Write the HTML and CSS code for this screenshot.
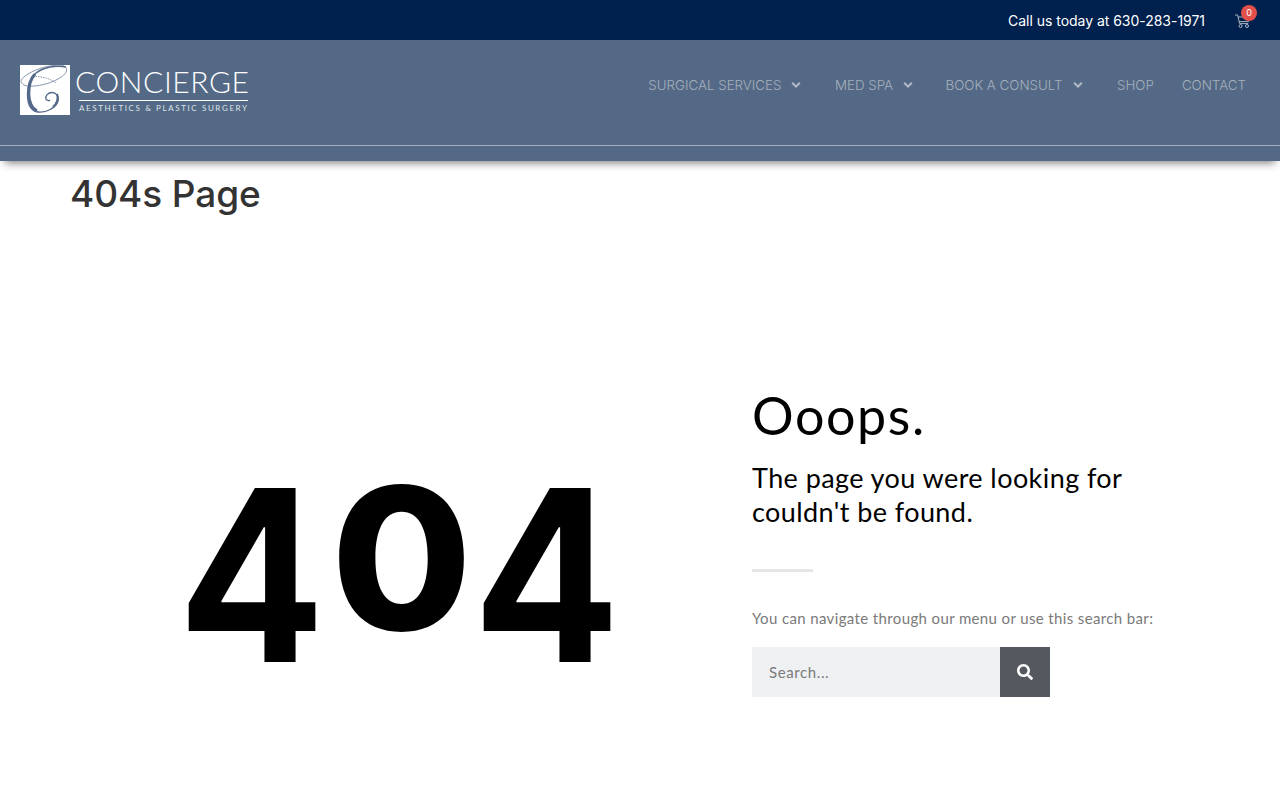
FILE: index.html
```html
<!DOCTYPE html>
<html lang="en">
<head>
<meta charset="utf-8">
<title>404s Page</title>
<link rel="stylesheet" href="styles.css">
</head>
<body>
<div class="topbar">
  <span class="phone">Call us today at 630-283-1971</span>
  <a class="cart" href="#">
    <svg class="cart-icon" viewBox="0 0 18 16" width="18" height="16" fill="none" stroke="#a9b2c0" stroke-width="1"><path d="M1 2h2.600l2 8.600h8.600"/><path d="M4 4h12l-1.400 4.600H5"/><circle cx="6.600" cy="13" r="1.500"/><circle cx="13" cy="13" r="1.500"/></svg>
    <span class="badge">0</span>
  </a>
</div>
<header class="header">
  <div class="header-main">
    <a class="logo" href="#">
      <svg width="232" height="60" viewBox="0 -6 232 60">
        <rect x="0" y="1" width="50" height="50" fill="#fff"/>
        <path d="M46 3C36 1 24 3 16 9C10 14 7.500 22 7.500 30C7.500 40 11 47 18 48C26 49 36 44 38 37C39 32 36 28.500 32 28.500C28 28.500 25 32 26 35C27 37 29 37 30 36" fill="none" stroke="#54698a" stroke-width="1.400"/>
        <path d="M15 10C10 15 8.800 22 8.800 30C8.800 38 12 45 17 47" fill="none" stroke="#54698a" stroke-width="3"/>
        <path d="M37 30C39 34 37 40 33 43" fill="none" stroke="#54698a" stroke-width="2.200"/>
        <path d="M1 16C6 9 24 1 40 1C50 2 48 10 38 15C28 21 10 24 4 21C1 19 1 17 1 16" fill="none" stroke="#54698a" stroke-width=".7"/>
        <path d="M13 12.700C22 12 31 15 36.700 19.300" fill="none" stroke="#54698a" stroke-width=".7" stroke-dasharray="1.500 1"/>
        <text class="logo-name" x="55" y="29" textLength="174" lengthAdjust="spacing">CONCIERGE</text>
        <rect x="59" y="36" width="169" height="1" fill="#fff"/>
        <text class="logo-sub" x="59" y="47" textLength="168" lengthAdjust="spacing">AESTHETICS &amp; PLASTIC SURGERY</text>
      </svg>
    </a>
    <nav class="nav">
      <a class="nav-item" href="#">SURGICAL SERVICES<svg class="chev" viewBox="0 0 10 8" width="10" height="8"><path d="M1.200 1.800 5 5.600l3.800-3.800" fill="none" stroke="#b3bcc8" stroke-width="2"/></svg></a>
      <a class="nav-item" href="#">MED SPA<svg class="chev" viewBox="0 0 10 8" width="10" height="8"><path d="M1.200 1.800 5 5.600l3.800-3.800" fill="none" stroke="#b3bcc8" stroke-width="2"/></svg></a>
      <a class="nav-item" href="#">BOOK A CONSULT<svg class="chev" viewBox="0 0 10 8" width="10" height="8"><path d="M1.200 1.800 5 5.600l3.800-3.800" fill="none" stroke="#b3bcc8" stroke-width="2"/></svg></a>
      <a class="nav-item" href="#">SHOP</a>
      <a class="nav-item" href="#">CONTACT</a>
    </nav>
  </div>
</header>
<main class="page">
  <h1 class="page-title">404s Page</h1>
  <div class="columns">
    <div class="left"><div class="big"><span class="digit four">4</span><span class="digit zero">0</span><span class="digit four last">4</span></div></div>
    <div class="right">
      <h2 class="oops">Ooops.</h2>
      <h3 class="lead">The page you were looking for couldn't be found.</h3>
      <div class="divider"></div>
      <p class="hint">You can navigate through our menu or use this search bar:</p>
      <form class="search">
        <input class="search-input" type="text" placeholder="Search...">
        <button class="search-btn" type="button" aria-label="Search">
          <svg viewBox="0 0 512 512" width="16" height="16"><path fill="#fff" d="M505 442.700 405.300 343c-4.500-4.500-10.600-7-17-7H372c27.600-35.300 44-79.700 44-128C416 93.100 322.900 0 208 0S0 93.100 0 208s93.100 208 208 208c48.300 0 92.700-16.400 128-44v16.300c0 6.400 2.500 12.500 7 17l99.700 99.700c9.400 9.400 24.600 9.400 33.900 0l28.300-28.300c9.400-9.400 9.400-24.600.1-34zM208 336c-70.700 0-128-57.200-128-128 0-70.700 57.200-128 128-128 70.700 0 128 57.200 128 128 0 70.700-57.200 128-128 128z"/></svg>
        </button>
      </form>
    </div>
  </div>
</main>
</body>
</html>
```
FILE: styles.css
```css
* { box-sizing: border-box; }
html, body { margin: 0; padding: 0; }
body { height: 800px; overflow: hidden; background: #fff; font-family: Inter, "Liberation Sans", sans-serif; }
a { text-decoration: none; color: inherit; }

.topbar { height: 40px; background: #00204e; display: flex; align-items: center; justify-content: flex-end; padding-right: 29px; }
.phone { color: #fff; font-size: 14px; line-height: 20px; margin-right: 29px; margin-top: 1px; letter-spacing: -.03px; }
.cart { position: relative; display: block; width: 17px; height: 16px; margin-top: 1px; }
.cart-icon { display: block; }
.badge { position: absolute; top: -8px; left: 7px; width: 16px; height: 16px; border-radius: 50%; background: #e2504c; color: #fff; font-size: 9px; line-height: 16px; text-align: center; }

.header { height: 121px; background: #546985; box-shadow: 0 7px 8px -5px rgba(0,0,0,.5); position: relative; padding-bottom: 15px; }
.header-main { height: 106px; border-bottom: 1px solid #a5b0bf; display: flex; justify-content: space-between; padding: 18px 34px 0 20px; }
.logo { display: block; height: 60px; }
.logo svg { display: block; }
.logo-name { font-family: Lato, sans-serif; font-weight: 300; font-size: 30px; fill: #fff; }
.logo-sub { font-family: Lato, sans-serif; font-size: 8px; fill: #dfe4ea; }

.nav { display: flex; height: 42px; margin-top: 6px; align-items: center; color: #a5afbd; font-size: 13.350px; font-weight: 300; }
.nav-item { display: flex; align-items: center; white-space: nowrap; margin-left: 33.500px; }
.nav-item:first-child { margin-left: 0; }
.nav-item:nth-child(3) { margin-left: 32.500px; }
.nav-item:nth-child(4) { margin-left: 34.500px; }
.nav-item:last-child { margin-left: 28px; }
.chev { margin-left: 10px; }

.page { padding: 0; }
.page-title { margin: 11px 0 0 70px; font-size: 37px; line-height: 44px; font-weight: 500; color: #333; letter-spacing: -.1px; }
.columns { display: flex; margin-top: 172px; }
.left { width: 752px; }
.big { display: flex; align-items: flex-start; padding-left: 187px; margin-top: 68px; font-family: Inter, sans-serif; font-weight: 800; color: #000; }
.digit { display: flex; justify-content: center; width: 129px; }
.four { font-size: 239px; line-height: 239px; font-weight: 700; transform: scaleX(.91); }
.zero { width: 131px; font-size: 198px; line-height: 198px; margin: 3px 15px 0 20px; transform: scaleX(1.030); }
.right { flex: 1; font-family: Lato, sans-serif; }
.oops { margin: -3px 0 0; font-size: 52px; line-height: 60px; font-weight: 400; color: #000; letter-spacing: 1.600px; }
.lead { margin: 16px 0 0; width: 400px; font-size: 27px; line-height: 34px; font-weight: 400; color: #000; letter-spacing: .42px; }
.divider { width: 61px; height: 3px; margin-top: 40px; background: #e6e6e6; }
.hint { margin: 35px 0 0; font-size: 15px; line-height: 22px; color: #7a7a7a; letter-spacing: .37px; }
.search { display: flex; width: 298px; height: 50px; margin-top: 18px; }
.search-input { flex: 1; min-width: 0; border: 0; outline: 0; background: #eef0f2; padding: 0 17px; font: 15px Lato, sans-serif; letter-spacing: .6px; color: #555; }
.search-input::placeholder { color: #7a7a7a; opacity: 1; }
.search-btn { width: 50px; border: 0; background: #54595f; padding: 0; display: flex; align-items: center; justify-content: center; }
```
